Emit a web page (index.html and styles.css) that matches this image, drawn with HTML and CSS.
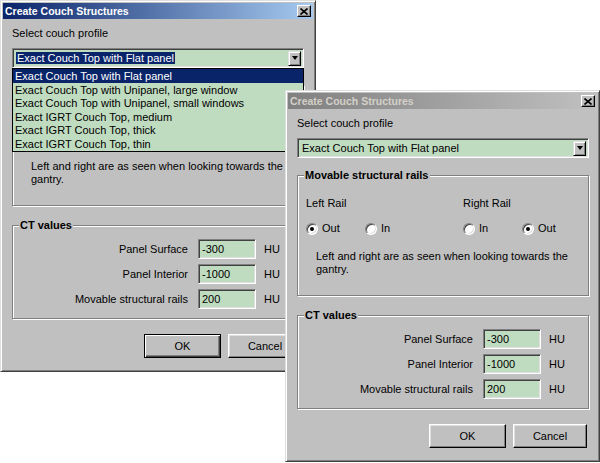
FILE: index.html
```html
<!DOCTYPE html>
<html>
<head>
<meta charset="utf-8">
<title>Create Couch Structures</title>
<link rel="stylesheet" href="styles.css">
</head>
<body>
<div class="desktop">

  <div class="window w1 active">
    <div class="titlebar">
      <span class="title">Create Couch Structures</span>
      <span class="close"><svg width="8" height="7" viewBox="0 0 8 7"><path d="M0.5 0.5L7.5 6.5M7.5 0.5L0.5 6.5" stroke="#000" stroke-width="1.6" fill="none"/></svg></span>
    </div>
    <div class="content">
      <div class="label">Select couch profile</div>
      <div class="combo">
        <span class="value"><span class="sel">Exact Couch Top with Flat panel</span></span>
        <span class="drop"><span class="arrow"></span></span>
        <ul class="list">
          <li class="hl">Exact Couch Top with Flat panel</li>
          <li>Exact Couch Top with Unipanel, large window</li>
          <li>Exact Couch Top with Unipanel, small windows</li>
          <li>Exact IGRT Couch Top, medium</li>
          <li>Exact IGRT Couch Top, thick</li>
          <li>Exact IGRT Couch Top, thin</li>
        </ul>
      </div>
      <fieldset class="group rails">
        <legend>Movable structural rails</legend>
        <div class="rails-grid">
          <div class="rail">
            <div>Left Rail</div>
            <div class="opts">
              <span class="opt"><span class="radio on"></span>Out</span>
              <span class="opt"><span class="radio"></span>In</span>
            </div>
          </div>
          <div class="rail">
            <div>Right Rail</div>
            <div class="opts">
              <span class="opt"><span class="radio"></span>In</span>
              <span class="opt"><span class="radio on"></span>Out</span>
            </div>
          </div>
        </div>
        <p class="note">Left and right are as seen when looking towards the gantry.</p>
      </fieldset>
      <fieldset class="group ct">
        <legend>CT values</legend>
        <div class="ct-grid">
          <span class="lab">Panel Surface</span><span class="field">-300</span><span class="unit">HU</span>
          <span class="lab">Panel Interior</span><span class="field">-1000</span><span class="unit">HU</span>
          <span class="lab">Movable structural rails</span><span class="field">200</span><span class="unit">HU</span>
        </div>
      </fieldset>
      <div class="buttons">
        <span class="btn default">OK</span>
        <span class="btn">Cancel</span>
      </div>
    </div>
  </div>

  <div class="window w2">
    <div class="titlebar">
      <span class="title">Create Couch Structures</span>
      <span class="close"><svg width="8" height="7" viewBox="0 0 8 7"><path d="M0.5 0.5L7.5 6.5M7.5 0.5L0.5 6.5" stroke="#000" stroke-width="1.6" fill="none"/></svg></span>
    </div>
    <div class="content">
      <div class="label">Select couch profile</div>
      <div class="combo">
        <span class="value"><span class="plain">Exact Couch Top with Flat panel</span></span>
        <span class="drop"><span class="arrow"></span></span>
      </div>
      <fieldset class="group rails">
        <legend>Movable structural rails</legend>
        <div class="rails-grid">
          <div class="rail">
            <div>Left Rail</div>
            <div class="opts">
              <span class="opt"><span class="radio on"></span>Out</span>
              <span class="opt"><span class="radio"></span>In</span>
            </div>
          </div>
          <div class="rail">
            <div>Right Rail</div>
            <div class="opts">
              <span class="opt"><span class="radio"></span>In</span>
              <span class="opt"><span class="radio on"></span>Out</span>
            </div>
          </div>
        </div>
        <p class="note">Left and right are as seen when looking towards the gantry.</p>
      </fieldset>
      <fieldset class="group ct">
        <legend>CT values</legend>
        <div class="ct-grid">
          <span class="lab">Panel Surface</span><span class="field">-300</span><span class="unit">HU</span>
          <span class="lab">Panel Interior</span><span class="field">-1000</span><span class="unit">HU</span>
          <span class="lab">Movable structural rails</span><span class="field">200</span><span class="unit">HU</span>
        </div>
      </fieldset>
      <div class="buttons">
        <span class="btn">OK</span>
        <span class="btn">Cancel</span>
      </div>
    </div>
  </div>

</div>
</body>
</html>
```

FILE: styles.css
```css
* { box-sizing: border-box; }
html, body { margin: 0; padding: 0; }
body {
  background: #fff;
  font: 11px/13px "Liberation Sans", Arial, sans-serif;
  color: #000;
  overflow: hidden;
}
.desktop { position: relative; width: 600px; height: 463px; }

.window {
  position: absolute;
  height: 372px;
  background: #c0c0c0;
  border: 1px solid;
  border-color: #dfdfdf #404040 #404040 #dfdfdf;
  box-shadow: inset 1px 1px 0 #fff, inset -1px -1px 0 #808080;
  padding: 2px;
  display: flex;
  flex-direction: column;
}
.w1 { left: 0; top: 0; width: 316px; z-index: 1; }
.w2 { left: 285px; top: 90px; width: 315px; z-index: 2; }

.titlebar {
  height: 16px;
  flex: none;
  display: flex;
  align-items: center;
  justify-content: space-between;
  padding: 0 2px 0 2px;
  background: linear-gradient(to right, #808080, #c0c0c0);
  color: #d4d0c8;
}
.active .titlebar { background: linear-gradient(to right, #0a246a, #a6caf0); color: #fff; }
.title { font-weight: bold; font-size: 10.5px; letter-spacing: 0; }
.close {
  width: 14px; height: 12px;
  background: #c0c0c0;
  border: 1px solid;
  border-color: #fff #000 #000 #fff;
  box-shadow: inset -1px -1px 0 #808080;
  display: flex; align-items: center; justify-content: center;
}
.close svg { display: block; }

.content {
  display: flex;
  flex-direction: column;
  align-items: flex-start;
  padding-left: 9px;
}
.label { margin-top: 8px; }

.combo {
  position: relative;
  margin-top: 8px;
  width: 292px;
  height: 20px;
  background: #c0dcc0;
  border: 1px solid;
  border-color: #808080 #fff #fff #808080;
  box-shadow: inset 1px 1px 0 #404040, inset -1px -1px 0 #dfdfdf;
  display: flex;
  align-items: center;
  justify-content: space-between;
  padding: 0 1px 0 3px;
}
.sel { background: #0a246a; color: #fff; padding: 0 1px; }
.plain { padding: 0 1px; }
.drop {
  width: 13px; height: 15px;
  margin-right: 1px;
  background: #c0c0c0;
  border: 1px solid;
  border-color: #dfdfdf #000 #000 #dfdfdf;
  box-shadow: inset 1px 1px 0 #fff, inset -1px -1px 0 #808080;
  display: flex; align-items: center; justify-content: center;
}
.arrow {
  width: 0; height: 0;
  border-left: 3.5px solid transparent;
  border-right: 3.5px solid transparent;
  border-top: 4px solid #000;
}
.list {
  position: absolute;
  z-index: 5;
  left: -1px; top: 19px;
  width: 292px;
  margin: 0; padding: 0 0 1px 0;
  list-style: none;
  background: #c0dcc0;
  border: 1px solid #000;
}
.list li { height: 13.5px; line-height: 15px; padding-left: 2px; white-space: nowrap; }
.list li.hl { background: #0a246a; color: #fff; }

.group {
  margin: 11px 0 0 0;
  padding: 0;
  min-width: 0;
  width: 292px;
  border: 1px solid #808080;
  box-shadow: 1px 1px 0 #fff, inset 1px 1px 0 #fff;
}
.group legend {
  margin-left: 6px;
  padding: 0 1px;
  font-weight: bold;
  line-height: 13px;
  background: #c0c0c0;
}
.rails-grid {
  display: grid;
  grid-template-columns: 157px 1fr;
  padding: 15px 0 0 8px;
}
.opts { display: flex; margin-top: 12px; }
.opt { display: flex; align-items: center; gap: 4px; width: 59px; }
.radio {
  width: 12px; height: 12px;
  border-radius: 50%;
  background: #fff;
  border: 1px solid;
  border-color: #808080 #fff #fff #808080;
  box-shadow: inset 1px 1px 0 #404040, inset -1px -1px 0 #dfdfdf;
  display: flex; align-items: center; justify-content: center;
}
.radio.on::after {
  content: "";
  width: 4px; height: 4px;
  border-radius: 50%;
  background: #000;
}
.note { margin: 15px 0 19px 18px; width: 262px; }

.ct { margin-top: 13px; }
.ct-grid {
  display: grid;
  grid-template-columns: 175px 58px auto;
  column-gap: 10px;
  row-gap: 5px;
  align-items: center;
  padding: 7px 0 9px 0;
}
.lab { text-align: right; }
.field {
  height: 20px;
  background: #c0dcc0;
  border: 1px solid;
  border-color: #808080 #fff #fff #808080;
  box-shadow: inset 1px 1px 0 #404040, inset -1px -1px 0 #dfdfdf;
  padding: 3px 0 0 3px;
}
.unit { margin-left: -2px; }

.buttons {
  display: flex;
  justify-content: flex-end;
  gap: 7px;
  width: 290px;
  margin-top: 15px;
}
.btn {
  width: 74px; height: 24px;
  border: 1px solid;
  border-color: #fff #000 #000 #fff;
  box-shadow: inset -1px -1px 0 #808080, inset 1px 1px 0 #dfdfdf;
  display: flex; align-items: center; justify-content: center;
}
.btn:first-child { width: 77px; }
.btn.default {
  border: 1px solid #000;
  box-shadow: inset 1px 1px 0 #fff, inset -1px -1px 0 #404040, inset -2px -2px 0 #808080;
}
```
